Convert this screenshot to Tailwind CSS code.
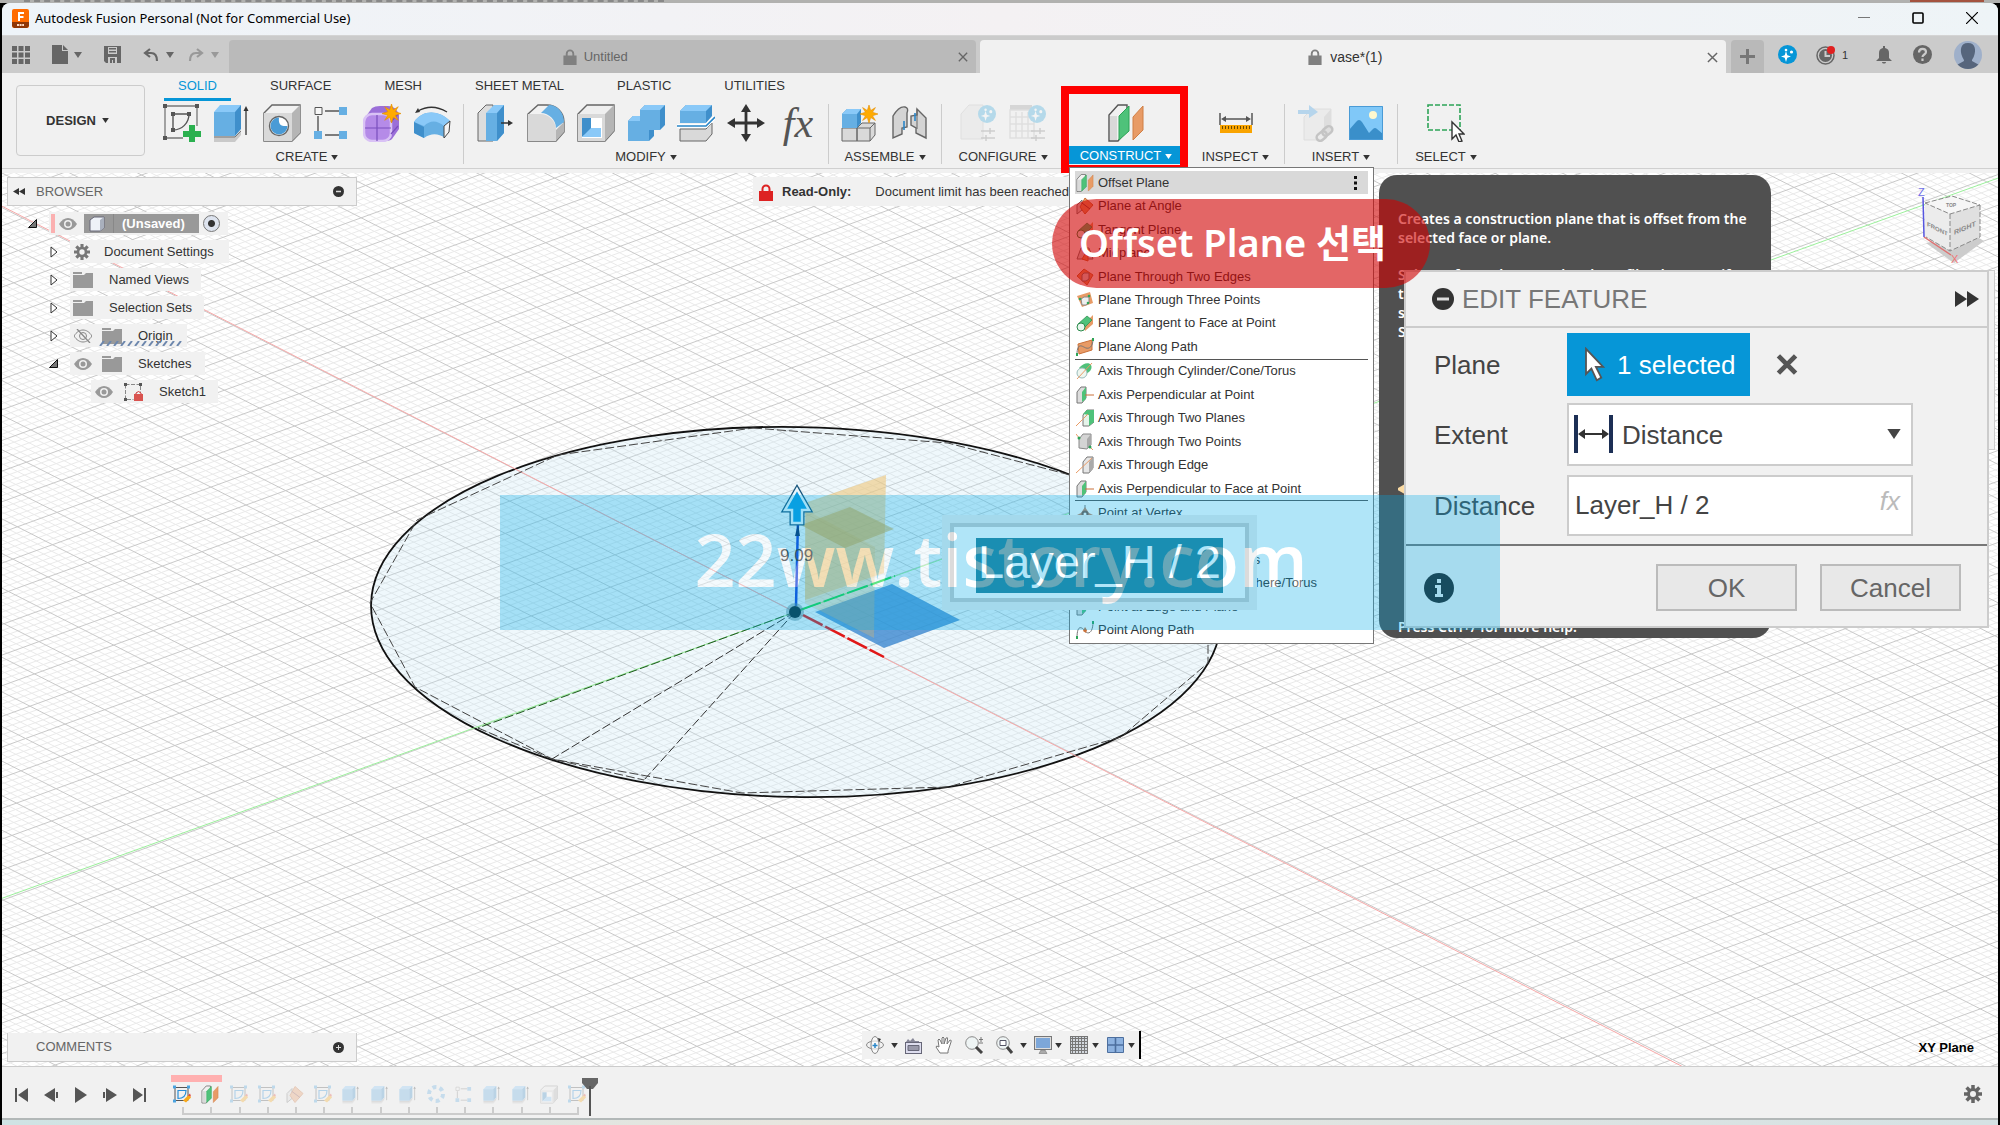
<!DOCTYPE html>
<html lang="en">
<head>
    <meta charset="UTF-8">
    <meta name="viewport" content="width=device-width, initial-scale=1.0">
    <title>Autodesk Fusion Personal (Not for Commercial Use)</title>
    <script src="https://cdn.jsdelivr.net/npm/@tailwindcss/browser@4"></script>
</head>
<body class="relative flex h-screen flex-col overflow-hidden bg-black font-['Liberation_Sans','Noto_Sans_CJK_KR',sans-serif] text-[13px] leading-4 text-[#333]">

    <!-- Shared icons -->
    <svg class="hidden" aria-hidden="true">
        <symbol id="caret" viewBox="0 0 8 6"><path d="M0 0h8L4 6z" fill="currentColor"/></symbol>
        <symbol id="lock" viewBox="0 0 14 17"><path d="M3.5 8V5a3.5 3.5 0 0 1 7 0v3" fill="none" stroke="currentColor" stroke-width="2"/><path d="M0 7h14v10H0z" fill="currentColor"/></symbol>
        <symbol id="close" viewBox="0 0 12 12"><path d="M1 1l10 10M11 1L1 11" stroke="currentColor" stroke-width="1.6"/></symbol>
        <symbol id="sketch" viewBox="0 0 38 38">
            <path d="M2 2h32v20M2 2v32h18" fill="none" stroke="#777" stroke-width="1.3"/>
            <path d="M10 10h16c0 9-7 16-16 16z" fill="none" stroke="#555" stroke-width="1.4"/>
            <path d="M0 0h4v4H0zM32 0h4v4h-4zM0 32h4v4H0zM8 8h4v4H8zM24 8h4v4h-4zM8 24h4v4H8z" fill="#555"/>
        </symbol>
        <symbol id="tl-sketch" viewBox="0 0 18 18">
            <path d="M2 2h13v13H2z" fill="none" stroke="#555"/><path d="M5 5h8c0 5-3 8-8 8z" fill="none" stroke="#2a8fd8" stroke-width="1.2"/>
            <path d="M0 0h3v3H0zM14 0h3v3h-3zM0 14h3v3H0z" fill="#4aa3e0"/><path d="M10 15l6-6 2 3-5 5z" fill="#f9a91a"/><path d="M15 10l2-2 1 3z" fill="#e0453a"/>
        </symbol>
        <symbol id="extrude" viewBox="0 0 38 38">
            <path d="M1 32h21l6-6v5l-6 7H1z" fill="#c9c9c9"/><path d="M1 33h21l6-6" fill="none" stroke="#777"/>
            <path d="M1 8l6-7h21v23l-6 7H1z" fill="#8ac9f8"/><path d="M1 8h21v24H1z" fill="#66afe3"/><path d="M22 8l6-7v24l-6 7z" fill="#3f8fcb"/>
            <path d="M33 31V6" stroke="#333" stroke-width="1.3"/><path d="M33 2l2.500 5h-5z" fill="#333"/>
        </symbol>
        <symbol id="pattern" viewBox="0 0 38 38">
            <path d="M12 7h14M5 12v15M12 31h14" stroke="#555" stroke-width="1.4"/><path d="M2 3.500h7v7H2z" fill="#f7f7f7" stroke="#555"/>
            <path d="M26 3h8v8h-8zM1 27h8v8H1zM26 27h8v8h-8z" fill="#66afe3"/>
        </symbol>
        <symbol id="shell" viewBox="0 0 38 38">
            <path d="M1 10l9-9h27v26l-9 10H1z" fill="#efefef" stroke="#666" stroke-width="1.4"/><path d="M28 10l9-9v26l-9 10z" fill="#b5b5b5"/>
            <path d="M1 10h27v27H1z" fill="#d9d9d9"/><path d="M5 14h20v20H5z" fill="#fff"/><path d="M5 14h9v12l-9 7z" fill="#3f8fcb"/><path d="M14 24h10v9H5z" fill="#8ac9f8"/>
        </symbol>
        <symbol id="offset" viewBox="0 0 38 38">
            <path d="M2 37V11l9-10h9v25l-9 11z" fill="#f1f1f1" stroke="#555" stroke-width="1.4"/><path d="M3 12h7v24H3z" fill="#d9d9d9"/>
            <path d="M12 36V12l10-10v25z" fill="#4fc27a" stroke="#2da457"/><path d="M26 36V13l10-11v24z" fill="#e89b66" stroke="#d07f45"/>
        </symbol>
        <symbol id="star" viewBox="0 0 18 18"><path d="M9 0l1.700 5.500L15.400 2.600 12.500 7.300 18 9l-5.500 1.700 2.900 4.700-4.700-2.900L9 18l-1.700-5.500-4.700 2.900 2.900-4.700L0 9l5.500-1.700L2.600 2.600l4.700 2.900z" fill="#ffab00" stroke="#e58e00" stroke-width=".6"/></symbol>
        <symbol id="sparkle" viewBox="0 0 19 19"><circle cx="9.500" cy="9.500" r="9.500" fill="#0696d7"/><path d="M8 6l1.300 4.200L13 11.500l-3.700 1.200L8 17l-1.300-4.300L3 11.500l3.700-1.300z" fill="#fff"/><circle cx="8" cy="5" r="1.300" fill="#fff"/><circle cx="13.500" cy="7" r="1.600" fill="#fff"/></symbol>
        <symbol id="eye" viewBox="0 0 18 12"><path d="M0 6c5-8 13-8 18 0-5 8-13 8-18 0z" fill="#999"/><circle cx="9" cy="6" r="4" fill="#f1f1f1"/><circle cx="9" cy="6" r="2.500" fill="#999"/></symbol>
        <symbol id="folder" viewBox="0 0 20 16"><path d="M0 0h9v2H0zM0 3h11l2-2h7v15H0z" fill="#999"/></symbol>
        <symbol id="closed" viewBox="0 0 8 12"><path d="M1 1l6 5-6 5z" fill="#fff" stroke="#333"/></symbol>
        <symbol id="opened" viewBox="0 0 9 9"><path d="M8.500.500v8h-8z" fill="#777" stroke="#111"/></symbol>
        <symbol id="gear" viewBox="0 0 18 18"><g stroke="currentColor" stroke-width="3.500"><path d="M9 0v18M0 9h18M2.600 2.600l12.800 12.800M15.400 2.600L2.600 15.400"/></g><circle cx="9" cy="9" r="6" fill="currentColor"/><circle cx="9" cy="9" r="3" fill="#f1f1f1"/></symbol>
        <!-- construct menu glyphs -->
        <symbol id="m-angle" viewBox="0 0 18 18"><path d="M1 8l5-5v10l-5 4z" fill="#ddd" stroke="#777"/><path d="M9 1l8 7-8 9-5-7z" fill="#e89b66" stroke="#c9713a"/><path d="M6 6l8 6" stroke="#844" /></symbol>
        <symbol id="m-tangent" viewBox="0 0 18 18"><path d="M7 11L17 1v9L9 17z" fill="#e89b66"/><path d="M2 10l9-8 5 4-9 9z" fill="#4fc27a" stroke="#2b8a4c" stroke-width=".7"/><circle cx="5" cy="13" r="4" fill="#e8f7ee" stroke="#2b8a4c"/></symbol>
        <symbol id="m-mid" viewBox="0 0 18 18"><path d="M1 15l4-11h8l4 11z" fill="#ddd" stroke="#777"/><path d="M6 15l6-10v12z" fill="#e89b66" stroke="#c9713a"/></symbol>
        <symbol id="m-edges" viewBox="0 0 18 18"><path d="M1 8l7-7 9 6-6 10z" fill="#e89b66" stroke="#c9713a"/><path d="M6 7l2-2h5v6l-3 2H6z" fill="#ddd" stroke="#777"/></symbol>
        <symbol id="m-points" viewBox="0 0 18 18"><path d="M1 5l13-4 3 11-11 4z" fill="#e89b66"/><path d="M5 8l3-2h5v6l-3 2H6z" fill="#eee" stroke="#888"/><circle cx="4" cy="8" r="1.300" fill="#2da457"/><circle cx="13" cy="5" r="1.300" fill="#2da457"/><circle cx="12" cy="12" r="1.300" fill="#2da457"/></symbol>
        <symbol id="m-path" viewBox="0 0 18 18"><path d="M2 6l14-4v10L3 16z" fill="#e89b66" stroke="#c9713a"/><path d="M1 17c0-14 6-8 9-7s7-1 7-9" fill="none" stroke="#777"/><path d="M0 15h2v3H0zM16 0h2v3h-2z" fill="#2da457"/></symbol>
        <symbol id="m-cyl" viewBox="0 0 18 18"><path d="M3 6c4-5 10-6 12-3 2 4-2 8-6 9z" fill="#4fc27a"/><circle cx="6" cy="11" r="5" fill="#eef7f0" stroke="#9bb"/><path d="M1 17L16 1" stroke="#e89b66"/></symbol>
        <symbol id="m-perp" viewBox="0 0 18 18"><path d="M1 17V6l4-5h5v11l-4 5z" fill="#ddd" stroke="#777"/><path d="M6 16V6l4-5v12z" fill="#4fc27a"/><path d="M9 9h9" stroke="#c9713a"/></symbol>
        <symbol id="m-axis" viewBox="0 0 18 18"><path d="M7 17V6l4-5h6v11l-4 5z" fill="#e6e6e6" stroke="#777"/><path d="M13 17V6l4-5v12z" fill="#aaa"/><path d="M0 17L16 2" stroke="#e89b66"/></symbol>
        <symbol id="m-axispts" viewBox="0 0 18 18"><path d="M3 15V6l4-5h8v11l-4 4z" fill="#d4d4d4" stroke="#888"/><path d="M11 16V6l4-5v11z" fill="#aaa"/><path d="M0 1l4 5M13 13l4 4" stroke="#e89b66"/><circle cx="3" cy="5" r="1.500" fill="#2da457"/><circle cx="14" cy="14" r="1.500" fill="#2da457"/></symbol>
        <symbol id="m-planes" viewBox="0 0 18 18"><path d="M7 17V6l4-5h7v12l-5 4z" fill="#e6f4ea" stroke="#777"/><path d="M7 5l4-4h7v12l-5 4V6z" fill="#4fc27a"/><path d="M0 17L12 5" stroke="#e89b66"/></symbol>
        <symbol id="m-vertex" viewBox="0 0 18 18"><path d="M9 1v5" stroke="#777"/><path d="M9 3l4 6 4 2-8 4-8-4 4-2z" fill="#c98a68"/><circle cx="9" cy="10" r="2.500" fill="#fff" stroke="#7a5d50" stroke-width="2"/></symbol>
        <symbol id="m-curve" viewBox="0 0 18 18"><path d="M1 17c0-14 5-11 8-7s8 2 8-9" fill="none" stroke="#777"/><path d="M0 15h2v3H0zM16 0h2v3h-2z" fill="#2da457"/><path d="M9 6l2 3-1 3-3-2z" fill="#c9713a"/></symbol>
    </svg>

    <!-- Edge of the window behind -->
    <div class="flex h-[3px] shrink-0 items-start justify-between bg-[#b1b1af] pr-4 pl-6">
        <div class="h-[2px] w-[640px] border-t-2 border-dashed border-[#888]"></div>
        <div class="h-[2px] w-[74px] bg-[#a4533f]"></div>
    </div>

    <div class="mx-[2px] flex min-h-0 flex-1 flex-col overflow-hidden rounded-t-lg bg-[#f1f1f1]">
        <!-- Title bar -->
        <header class="flex h-[33px] shrink-0 items-center border-b border-[#d4d4d4] bg-linear-to-r from-[#eef4f9] via-[#f4f1f3] to-[#eef4f7] pr-5 pb-[2px] pl-[10px]">
            <svg class="h-[19px] w-[17px]" viewBox="0 0 17 19"><rect width="17" height="19" rx="2" fill="#ff6b00"/><path d="M0 13h17v4l-2 2H2l-2-2z" fill="#8f3606"/><path d="M6 3h6v2H8v2h3.500v2H8v3H6z" fill="#fff"/><path d="M5 16h7" stroke="#ffd9c0" stroke-dasharray="2 .6" stroke-width="2"/></svg>
            <h1 class="ml-[6px] flex-1 font-['Noto_Sans',sans-serif] text-[13px] text-black">Autodesk Fusion Personal (Not for Commercial Use)</h1>
            <div class="flex items-center gap-[42px] text-black">
                <button aria-label="Minimize"><svg class="h-3 w-3" viewBox="0 0 12 12"><path d="M0 5.500h12" stroke="#777"/></svg></button>
                <button aria-label="Maximize"><svg class="h-3 w-3" viewBox="0 0 12 12"><rect x="1" y="1" width="10" height="10" rx="1" fill="none" stroke="#000" stroke-width="1.600"/></svg></button>
                <button aria-label="Close"><svg class="h-3 w-3" viewBox="0 0 12 12"><path d="M0 0l12 12M12 0L0 12" stroke="#000" stroke-width="1.200"/></svg></button>
            </div>
        </header>

        <!-- Quick access and document tabs -->
        <nav class="flex h-[37px] shrink-0 items-end bg-[#cbcbcb] text-[#666]">
            <div class="flex h-full w-[227px] shrink-0 items-center pl-[10px]">
                <button aria-label="Data panel"><svg class="h-[18px] w-[18px]" viewBox="0 0 18 18"><path d="M2.500 0v18M9 0v18M15.500 0v18" stroke="currentColor" stroke-width="5" stroke-dasharray="5 1.500"/></svg></button>
                <button class="ml-[22px] flex items-center gap-[6px]" aria-label="File"><svg class="h-[19px] w-4" viewBox="0 0 16 19"><path d="M0 0h10v6h6v13H0z" fill="currentColor"/><path d="M11 0l5 5h-5z" fill="currentColor"/></svg><svg class="h-[6px] w-2"><use href="#caret"/></svg></button>
                <button class="ml-[22px]" aria-label="Save"><svg class="h-[17px] w-[17px]" viewBox="0 0 17 17"><path d="M0 0h17v17H2l-2-2z" fill="currentColor"/><path d="M4 1h9v7H4zM4 11h9v6H4z" fill="#cbcbcb"/><path d="M5 2h7v1.500H5zM5 5h7v1.500H5zM6 12h5v5H9v-3H8v3H6z" fill="currentColor"/></svg></button>
                <button class="ml-[22px] flex items-center gap-[7px]" aria-label="Undo"><svg class="h-[14px] w-4" viewBox="0 0 16 14"><path d="M2 5h6c4 0 6 3 6 8M7 1L2 5l5 4" fill="none" stroke="currentColor" stroke-width="2.200"/></svg><svg class="h-[6px] w-2"><use href="#caret"/></svg></button>
                <button class="ml-[14px] flex items-center gap-[7px] text-[#999]" aria-label="Redo"><svg class="h-[14px] w-4" viewBox="0 0 16 14"><path d="M14 5H8c-4 0-6 3-6 8M9 1l5 4-5 4" fill="none" stroke="currentColor" stroke-width="2.200"/></svg><svg class="h-[6px] w-2"><use href="#caret"/></svg></button>
            </div>
            <div class="flex h-[33px] flex-1 items-center rounded-t-[4px] bg-[#bababa] pt-px pr-2 pl-1">
                <a href="#" class="flex flex-1 items-center justify-center gap-[7px]"><svg class="h-4 w-[14px] text-[#808080]"><use href="#lock"/></svg>Untitled</a>
                <button aria-label="Close Untitled"><svg class="h-[10px] w-[10px]"><use href="#close"/></svg></button>
            </div>
            <div class="ml-1 flex h-[33px] flex-1 items-center rounded-t-[4px] bg-[#f1f1f1] pt-px pr-2 pl-1">
                <a href="#" class="flex flex-1 items-center justify-center gap-2 text-[14px] text-[#333]"><svg class="h-4 w-[14px] text-[#808080]"><use href="#lock"/></svg>vase*(1)</a>
                <button aria-label="Close vase"><svg class="h-[11px] w-[11px]"><use href="#close"/></svg></button>
            </div>
            <button class="ml-[5px] flex h-[33px] w-[33px] items-center justify-center rounded-t-[4px] bg-[#b9b9b9]" aria-label="New tab"><svg class="h-[15px] w-[15px]" viewBox="0 0 15 15"><path d="M7.500 0v15M0 7.500h15" stroke="#777" stroke-width="3"/></svg></button>
            <div class="flex h-full w-[234px] shrink-0 items-center pr-4 pl-[14px]">
                <button aria-label="Extensions"><svg class="h-[19px] w-[19px]"><use href="#sparkle"/></svg></button>
                <button class="ml-[19px] flex items-center gap-[6px]" aria-label="Job status"><svg class="h-5 w-5" viewBox="0 0 20 20"><circle cx="9.500" cy="10.500" r="8.500" fill="none" stroke="currentColor" stroke-width="1.500"/><circle cx="9.500" cy="10.500" r="6.500" fill="currentColor"/><path d="M9.500 6v5H14" stroke="#cbcbcb" stroke-width="2" fill="none"/><circle cx="15" cy="5" r="4" fill="#e02020"/></svg><span class="text-[11px] text-[#333]">1</span></button>
                <button aria-label="Notifications" class="ml-7"><svg class="h-[18px] w-4" viewBox="0 0 16 18"><path d="M7 0h2v2c3 .5 4 2.500 4 5v5l3 3H0l3-3V7c0-2.500 1-4.500 4-5zM6 16h4c0 2-4 2-4 0z" fill="currentColor"/></svg></button>
                <button aria-label="Help" class="ml-[21px]"><svg class="h-[19px] w-[19px]" viewBox="0 0 19 19"><circle cx="9.500" cy="9.500" r="9.500" fill="currentColor"/><path d="M6 7.500c0-5 7-4.500 7-.5 0 2.500-3.500 2.500-3.500 5M9.500 13.500v2.500" fill="none" stroke="#cbcbcb" stroke-width="2.200"/></svg></button>
                <button aria-label="Account" class="ml-auto"><svg class="h-7 w-7" viewBox="0 0 28 28"><clipPath id="round"><circle cx="14" cy="14" r="14"/></clipPath><g clip-path="url(#round)"><path d="M0 0h28v28H0z" fill="#9fb0ca"/><path d="M14 2c8 0 8 8 6 13-1 3-2 3-2 5l9 5v3H1v-3l9-5c0-2-1-2-2-5C6 10 6 2 14 2z" fill="#56657c"/></g></svg></button>
            </div>
        </nav>

        <!-- Ribbon -->
        <div class="flex h-[96px] shrink-0 border-b border-[#d0d0d0]">
            <button class="mt-3 mr-[6px] ml-[14px] flex h-[71px] w-[129px] shrink-0 items-center justify-center gap-[6px] rounded-[4px] border border-[#ccc] pr-[6px] font-bold">DESIGN <svg class="h-[5px] w-[7px]"><use href="#caret"/></svg></button>
            <div>
                <div class="flex h-[28px] gap-[25px] pl-[13px]">
                    <a href="#" class="border-b-[3px] border-[#0696d7] px-[14px] pt-[5px] text-[#0696d7]">SOLID</a>
                    <a href="#" class="px-[14px] pt-[5px]">SURFACE</a>
                    <a href="#" class="px-[14px] pt-[5px]">MESH</a>
                    <a href="#" class="px-[14px] pt-[5px]">SHEET METAL</a>
                    <a href="#" class="px-[14px] pt-[5px]">PLASTIC</a>
                    <a href="#" class="px-[14px] pt-[5px]">UTILITIES</a>
                </div>
                <div class="mt-[3px] flex h-[60px]">
                    <!-- Create -->
                    <section class="border-r border-[#ccc] px-[6px]">
                        <div class="flex">
                            <button class="flex w-[50px] justify-center" aria-label="Create Sketch"><svg class="h-[38px] w-[38px]" viewBox="0 0 38 38"><use href="#sketch" width="38" height="38"/><path d="M26 21h6v6h6v6h-6v5h-6v-5h-6v-6h6z" fill="#2bb04f"/></svg></button>
                            <button class="flex w-[50px] justify-center" aria-label="Extrude"><svg class="h-[38px] w-[38px]"><use href="#extrude"/></svg></button>
                            <button class="flex w-[50px] justify-center" aria-label="Hole"><svg class="h-[38px] w-[38px]" viewBox="0 0 38 38"><path d="M1 9l8-8h28v28l-8 8H1z" fill="#f2f2f2" stroke="#666" stroke-width="1.400"/><path d="M29 9l8-8v28l-8 8z" fill="#b5b5b5"/><path d="M1 9h28v28H1z" fill="#d9d9d9"/><circle cx="16" cy="22" r="9.500" fill="#fff" stroke="#666" stroke-width="1.400"/><path d="M16 13.500c-1 8 3 9 8.500 8.500A8.500 8.500 0 1 1 16 13.500z" fill="#4a9bd6"/></svg></button>
                            <button class="flex w-[50px] justify-center" aria-label="Rectangular Pattern"><svg class="h-[38px] w-[38px]"><use href="#pattern"/></svg></button>
                            <button class="flex w-[50px] justify-center" aria-label="Create Form"><svg class="h-[38px] w-[38px]" viewBox="0 0 38 38"><path d="M1 15L9 4q3-2 8-2h8q8 0 11 9v14l-7 10q-2 2-8 2h-9Q1 37 1 28z" fill="#9b6fd8"/><rect x="1" y="10" width="27" height="27" rx="8" fill="#b58be8" stroke="#d9c2f5" stroke-width="2.500"/><path d="M14 11v26M2 24h26M28 18l7-8M28 30l7-8" stroke="#7a4fbd" stroke-width="1.200"/><use href="#star" x="19" y="0" width="19" height="19"/></svg></button>
                            <button class="flex w-[50px] justify-center" aria-label="Revolve"><svg class="h-[38px] w-[38px]" viewBox="0 0 38 38"><path d="M1 18c8-12 24-13 36-1l-5 17c-7-5-14-5-21 0L1 29z" fill="#66afe3"/><path d="M1 18c8-12 24-13 36-1l-6 5c-7-6-14-6-20 0z" fill="#8ac9f8"/><path d="M1 18l10 5v11L1 29z" fill="#3f8fcb"/><path d="M31 22l6-5-1 11-5 6z" fill="#f4f4f4" stroke="#444"/><path d="M5 7q14-8 29 1" fill="none" stroke="#333" stroke-width="1.300"/><path d="M2 9l3-5 2 4z" fill="#333"/></svg></button>
                        </div>
                        <button class="mt-[7px] flex w-full items-center justify-center gap-1">CREATE <svg class="h-[5px] w-[7px]"><use href="#caret"/></svg></button>
                    </section>
                    <!-- Modify -->
                    <section class="border-r border-[#ccc] px-[7px]">
                        <div class="flex">
                            <button class="flex w-[50px] justify-center" aria-label="Press Pull"><svg class="h-[38px] w-[38px]" viewBox="0 0 38 38"><path d="M1 37V9l8-8h7v36z" fill="#ddd" stroke="#666"/><path d="M9 37V9l8-8h10v28l-7 8z" fill="#8ac9f8"/><path d="M9 9h11v28H9z" fill="#66afe3"/><path d="M20 9l7-8v28l-7 8z" fill="#3f8fcb"/><path d="M24 19h8" stroke="#333" stroke-width="1.400"/><path d="M31 16l5 3-5 3z" fill="#333"/></svg></button>
                            <button class="flex w-[50px] justify-center" aria-label="Fillet"><svg class="h-[38px] w-[38px]" viewBox="0 0 38 38"><path d="M1 10l10-9h9c9 0 17 7 17 17v10l-8 9H1z" fill="#f2f2f2" stroke="#666" stroke-width="1.400"/><path d="M29 26l8-8v10l-8 9z" fill="#b5b5b5"/><path d="M1 10h12c9 0 16 7 16 16v11H1z" fill="#d9d9d9"/><path d="M14 9l8-8c9 0 15 8 15 17l-8 6c0-8-7-15-15-15z" fill="#66afe3"/></svg></button>
                            <button class="flex w-[50px] justify-center" aria-label="Shell"><svg class="h-[38px] w-[38px]"><use href="#shell"/></svg></button>
                            <button class="flex w-[50px] justify-center" aria-label="Combine"><svg class="h-[38px] w-[38px]" viewBox="0 0 38 38"><path d="M1 17l5-5h7V6l5-5h20v20l-5 5h-6v6l-5 5H1z" fill="#3f8fcb"/><path d="M1 17l5-5h7v5zM13 6l5-5h20l-5 5z" fill="#8ac9f8"/><path d="M1 17h12V6h20v20H22v11H1z" fill="#66afe3"/></svg></button>
                            <button class="flex w-[50px] justify-center" aria-label="Split Body"><svg class="h-[38px] w-[38px]" viewBox="0 0 38 38"><path d="M3 25h26l6-6v11l-6 7H3z" fill="#d9d9d9" stroke="#666"/><path d="M3 7l6-6h26v11l-6 7H3z" fill="#3f8fcb"/><path d="M3 7l6-6h26l-6 6z" fill="#8ac9f8"/><path d="M3 7h26v12H3z" fill="#66afe3"/><path d="M0 22h29l9-9" fill="none" stroke="#fff" stroke-width="4"/><path d="M0 22h29l9-9" fill="none" stroke="#2a86c8" stroke-width="1.600"/></svg></button>
                            <button class="flex w-[50px] justify-center" aria-label="Move"><svg class="h-[38px] w-[38px]" viewBox="0 0 38 38"><path d="M19 5v28M5 19h28" stroke="#333" stroke-width="2.800"/><path d="M19 0l5 8H14zM19 38l5-8H14zM0 19l8-5v10zM38 19l-8-5v10z" fill="#333"/></svg></button>
                            <button class="h-[38px] w-[50px] pl-1 text-center font-['Liberation_Serif',serif] text-[42px] leading-[32px] text-[#555] italic" aria-label="Change Parameters">fx</button>
                        </div>
                        <button class="mt-[7px] flex w-full items-center justify-center gap-1">MODIFY <svg class="h-[5px] w-[7px]"><use href="#caret"/></svg></button>
                    </section>
                    <!-- Assemble -->
                    <section class="border-r border-[#ccc] px-[6px]">
                        <div class="flex">
                            <button class="flex w-[50px] justify-center" aria-label="New Component"><svg class="h-[38px] w-[38px]" viewBox="0 0 38 38"><path d="M1 24h15v13H1zM16 24l5-5h13v12l-5 6H16z" fill="#d9d9d9" stroke="#666"/><path d="M16 24h13v13M29 24l5-5" fill="none" stroke="#666"/><path d="M1 10l5-5h14v14l-4 5H1z" fill="#3f8fcb"/><path d="M1 10h15v14H1z" fill="#66afe3"/><path d="M1 10l5-5h14l-4 5z" fill="#8ac9f8"/><use href="#star" x="19" y="1" width="18" height="18"/></svg></button>
                            <button class="flex w-[50px] justify-center" aria-label="Joint"><svg class="h-[38px] w-[38px]" viewBox="0 0 38 38"><path d="M2 12Q8 2 14 3q4 1 2 6v14l-5 1v6l-9 4zM26 5l9 9v20l-10-5v-5l-5-3v-9l6-1z" fill="#d4d4d4" stroke="#666" stroke-width="1.400"/><path d="M26 5v20" stroke="#666"/><path d="M13 17v9M24 9v8" stroke="#2a86c8" stroke-width="1.600"/></svg></button>
                        </div>
                        <button class="mt-[7px] flex w-full items-center justify-center gap-1">ASSEMBLE <svg class="h-[5px] w-[7px]"><use href="#caret"/></svg></button>
                    </section>
                    <!-- Configure -->
                    <section class="border-r border-[#ccc] px-[11px]">
                        <div class="flex">
                            <button class="flex w-[50px] justify-center opacity-25" aria-label="Configure Design"><svg class="h-[38px] w-[38px]" viewBox="0 0 38 38"><path d="M2 10l8-9h14v34H2z" fill="#ddd" stroke="#aaa"/><use href="#sparkle" x="19" y="1" width="18" height="18"/><path d="M22 27h14M22 34h14M31 24v6M27 31v6" stroke="#666" stroke-width="1.500"/></svg></button>
                            <button class="flex w-[50px] justify-center opacity-25" aria-label="Configuration Table"><svg class="h-[38px] w-[38px]" viewBox="0 0 38 38"><path d="M1 1h22v5H1z" fill="#888"/><path d="M1 6h24v28H1zM1 13h24M1 20h24M1 27h24M7 8v26M13 8v26M19 8v26" fill="none" stroke="#aaa" stroke-width="1.500"/><use href="#sparkle" x="19" y="1" width="18" height="18"/><path d="M22 27h14M22 34h14M31 24v6M27 31v6" stroke="#666" stroke-width="1.500"/></svg></button>
                        </div>
                        <button class="mt-[7px] flex w-full items-center justify-center gap-1">CONFIGURE <svg class="h-[5px] w-[7px]"><use href="#caret"/></svg></button>
                    </section>
                    <!-- Construct -->
                    <section class="w-[122px] px-1">
                        <button class="flex w-full justify-center" aria-label="Offset Plane"><svg class="h-[38px] w-[38px]"><use href="#offset"/></svg></button>
                        <button class="mt-1 flex h-[18px] w-full items-center justify-center gap-1 bg-[#0696d7] pt-[2px] text-white">CONSTRUCT <svg class="h-[5px] w-[7px]"><use href="#caret"/></svg></button>
                    </section>
                    <!-- Inspect -->
                    <section class="w-[98px] border-r border-[#ccc] px-[6px]">
                        <button class="flex w-full justify-center" aria-label="Measure"><svg class="h-[38px] w-[38px]" viewBox="0 0 38 38"><path d="M3 9v12M35 9v12M7 15h24" stroke="#555" stroke-width="1.500"/><path d="M4 15l5-3v6zM34 15l-5-3v6z" fill="#555"/><path d="M3 21h32v8H3z" fill="#f9a400"/><path d="M5 23.500h28" stroke="#6b4a00" stroke-width="3" stroke-dasharray="1 2"/></svg></button>
                        <button class="mt-[7px] flex w-full items-center justify-center gap-1">INSPECT <svg class="h-[5px] w-[7px]"><use href="#caret"/></svg></button>
                    </section>
                    <!-- Insert -->
                    <section class="border-r border-[#ccc] px-[6px]">
                        <div class="flex">
                            <button class="flex w-[50px] justify-center opacity-50" aria-label="Insert Derive"><svg class="h-[38px] w-[38px]" viewBox="0 0 38 38"><path d="M7 13l8-8h19v23l-7 8H7z" fill="#e6e6e6" stroke="#ccc"/><path d="M27 13l7-8v23l-7 8z" fill="#ccc"/><path d="M1 6h11V1l9 7-9 6v-4H1z" fill="#7dbbe8"/><rect x="19" y="29" width="11" height="7" rx="3.500" transform="rotate(-40 24 32)" fill="none" stroke="#999" stroke-width="2.500"/><rect x="25" y="23" width="11" height="7" rx="3.500" transform="rotate(-40 31 27)" fill="none" stroke="#999" stroke-width="2.500"/></svg></button>
                            <button class="flex w-[50px] justify-center" aria-label="Canvas"><svg class="h-[38px] w-[38px]" viewBox="0 0 38 38"><path d="M2 2h34v34H2z" fill="#80c8f8"/><circle cx="26" cy="11" r="4" fill="#fff9cf"/><path d="M2 26l7-8q3-4 6 0l7 11 4-4q2-2 4 0l6 5v6H2z" fill="#3a8fca"/><path d="M2.500 2.500h33v33h-33z" fill="none" stroke="#4a9bd6"/></svg></button>
                        </div>
                        <button class="mt-[7px] flex w-full items-center justify-center gap-1">INSERT <svg class="h-[5px] w-[7px]"><use href="#caret"/></svg></button>
                    </section>
                    <!-- Select -->
                    <section class="w-[96px] px-[6px]">
                        <button class="flex w-full justify-center" aria-label="Select"><svg class="h-[38px] w-[38px]" viewBox="0 0 38 38"><rect x="1" y="1" width="32" height="25" fill="none" stroke="#2da457" stroke-width="1.600" stroke-dasharray="5 2"/><path d="M25 18v17l4-4 3 7 3-1-3-7h5z" fill="#fff" stroke="#333" stroke-width="1.400"/></svg></button>
                        <button class="mt-[7px] flex w-full items-center justify-center gap-1">SELECT <svg class="h-[5px] w-[7px]"><use href="#caret"/></svg></button>
                    </section>
                </div>
            </div>
        </div>

        <!-- Modelling canvas -->
        <main class="relative mt-1 min-h-0 flex-1 overflow-hidden bg-white">
            <svg class="absolute inset-0 h-full w-full" role="img" aria-label="Circle sketch on the XY plane">
                <g transform="translate(793 439)" fill="none">
                    <path id="minorGrid" stroke="#eaeaea"/>
                    <path id="majorGrid" stroke="#c9c9c9"/>
                    <ellipse rx="425" ry="185" transform="translate(1 0) rotate(1.050)" fill="#bfe3f5" fill-opacity=".25" stroke="#111" stroke-width="1.800"/>
                    <path d="M-1600-819L1400 717" stroke="#f7a8a8"/>
                    <path d="M-1000 361L1400-505" stroke="#9bf09b"/>
                    <path d="M-42-184L153-169 275-137 365-88 413-37 413 51 326 125 153 175-53 181-243 147-380 75-425-9-378-92-237-157zM-317 116L-243 147-151 168" stroke="#444" stroke-dasharray="9 3"/>
                    <path d="M0 0L-317 116" stroke="#1e5a1e" stroke-dasharray="9 3"/>
                    <path d="M0 0L-243 147M0 0L-151 168" stroke="#333" stroke-dasharray="9 3"/>
                    <path d="M20 0L97-28 165 8 89 36z" fill="#3b87cf" fill-opacity=".8"/>
                    <path d="M10-109L91-137 89-39 10-12z" fill="#efc77a" fill-opacity=".6"/>
                    <path d="M11-102L80-65 79 26 10-9z" fill="#e8b860" fill-opacity=".3"/>
                    <path d="M6-87L55-105 99-83 50-64z" fill="#cf9f30" fill-opacity=".5"/>
                    <path d="M5-2L100-36" stroke="#19d94b" stroke-width="2" stroke-dasharray="22 3"/>
                    <path d="M8 3L89 45" stroke="#e01818" stroke-width="2.500" stroke-dasharray="22 3"/>
                    <path d="M1-6L3-92" stroke="#1440d8" stroke-width="2.500"/>
                    <path d="M3-88l-3 12h5z" fill="#0a2a66"/>
                    <path d="M2-123l12 21H7v13H-3v-13h-7z" fill="#0c9be0" stroke="#17557c" stroke-width="5"/>
                    <path d="M2-123l12 21H7v13H-3v-13h-7z" fill="#0c9be0" stroke="#e8f6fd" stroke-width="2.500"/>
                    <circle r="9" fill="#5c8896" fill-opacity=".5"/><circle r="6" fill="#0d2a35"/>
                    <text x="-15" y="-51" font-size="17" fill="#333">9.09</text>
                </g>
            </svg>

            <!-- View cube -->
            <svg class="absolute top-[12px] right-[10px] h-[84px] w-[72px]" viewBox="0 0 72 84">
                <path d="M10 58l28 20 30-22-10-6z" fill="#ccc"/>
                <path d="M9 18l27-7 28 9v32L34 66 8 52z" fill="#ececec"/><path d="M34 29l30-9v32L34 66z" fill="#e0e0e0"/><path d="M9 18l27-7 28 9-30 9z" fill="#f6f6f6"/>
                <path d="M9 18l27-7 28 9-30 9zM34 29v37M64 20v32L34 66 10 52" fill="none" stroke="#888" stroke-dasharray="5 2"/>
                <path d="M7 12l1 40" stroke="#5555e0" stroke-width="1.500"/><path d="M8 52l27 18" stroke="#e07070" stroke-width="1.500"/>
                <g font-size="8" font-weight="bold" fill="#888"><text transform="translate(11 41) skewY(26)" font-size="6">FRONT</text><text transform="translate(38 50) skewY(-23)" font-size="7">RIGHT</text><text x="30" y="22" font-size="5">TOP</text></g>
                <text x="2" y="11" font-size="11" fill="#7070e8">Z</text><text x="35" y="78" font-size="11" fill="#ee7777">X</text>
            </svg>

            <!-- Read-only notice -->
            <div class="absolute top-1 left-[751px] flex h-[29px] w-[440px] items-center bg-[#f1f1f1] pt-px pl-[6px]">
                <svg class="h-[17px] w-[14px] text-[#dd2222]"><use href="#lock"/></svg>
                <b class="ml-[9px]">Read-Only:</b>
                <span class="ml-6">Document limit has been reached</span>
            </div>

            <!-- Browser -->
            <aside class="absolute top-1 left-[5px] w-[350px]">
                <div class="flex h-[29px] items-center border border-[#ccc] bg-[#f1f1f1] pr-3 pl-[5px] text-[#666]">
                    <svg class="h-[7px] w-3" viewBox="0 0 12 7"><path d="M6 0v7L0 3.500zM12 0v7L6 3.500z" fill="#333"/></svg>
                    <h2 class="ml-[11px] flex-1">BROWSER</h2>
                    <button aria-label="Collapse browser"><svg class="h-[11px] w-[11px]" viewBox="0 0 11 11"><circle cx="5.500" cy="5.500" r="5.500" fill="#333"/><path d="M3 5.500h5" stroke="#ddd" stroke-width="1.500"/></svg></button>
                </div>
                <ul class="mt-[6px] flex flex-col gap-[5px]">
                    <li class="flex h-[23px] items-center pl-[21px]">
                        <svg class="h-[9px] w-[9px]"><use href="#opened"/></svg>
                        <div class="ml-3 flex h-full w-[179px] items-center bg-[#f1f1f1] pl-[2px]">
                            <span class="h-[19px] w-1 bg-[#fbb0b0]"></span>
                            <svg class="ml-1 h-3 w-[18px]"><use href="#eye"/></svg>
                            <span class="ml-[7px] flex h-[19px] w-[115px] items-center bg-[#999] pl-[5px] font-bold text-white"><svg class="h-4 w-4" viewBox="0 0 16 16"><path d="M1 4l4-3h10v11l-4 3H1z" fill="#eef2f8" stroke="#667"/><path d="M11 4l4-3v11l-4 3z" fill="#a9b0bd"/></svg><i class="ml-2 h-full w-px bg-[#888]"></i><span class="flex-1 pl-2">(Unsaved)</span></span>
                            <input type="radio" checked aria-label="Activate" class="ml-[4px] h-[17px] w-[17px] appearance-none rounded-full border border-[#777] bg-[radial-gradient(circle,#333_3px,#dde3ee_4px)]">
                        </div>
                    </li>
                    <li class="flex h-[23px] items-center pl-[43px]"><svg class="h-3 w-2"><use href="#closed"/></svg><div class="ml-3 flex h-full items-center bg-[#f1f1f1] pr-[15px] pl-1"><svg class="h-4 w-4 text-[#777]"><use href="#gear"/></svg><span class="ml-[14px]">Document Settings</span></div></li>
                    <li class="flex h-[23px] items-center pl-[43px]"><svg class="h-3 w-2"><use href="#closed"/></svg><div class="ml-3 flex h-full items-center bg-[#f1f1f1] pr-3 pl-[3px]"><svg class="h-4 w-5"><use href="#folder"/></svg><span class="ml-4">Named Views</span></div></li>
                    <li class="flex h-[23px] items-center pl-[43px]"><svg class="h-3 w-2"><use href="#closed"/></svg><div class="ml-3 flex h-full items-center bg-[#f1f1f1] pr-3 pl-[3px]"><svg class="h-4 w-5"><use href="#folder"/></svg><span class="ml-4">Selection Sets</span></div></li>
                    <li class="flex h-[23px] items-center pl-[43px]"><svg class="h-3 w-2"><use href="#closed"/></svg><div class="relative ml-3 flex h-full items-center bg-[#f1f1f1] pr-[14px] pl-1"><svg class="h-[14px] w-[18px]" viewBox="0 0 18 14"><path d="M0 7c5-8 13-8 18 0-5 8-13 8-18 0z" fill="none" stroke="#888"/><circle cx="9" cy="7" r="3.500" fill="none" stroke="#888"/><path d="M3 0l13 14" stroke="#888" stroke-width="1.300"/></svg><svg class="ml-[10px] h-4 w-5"><use href="#folder"/></svg><span class="ml-4">Origin</span>
                        <svg class="absolute bottom-px left-[29px] h-[5px] w-[84px]" viewBox="0 0 84 5"><path d="M1 5l4-5M8 5l4-5M15 5l4-5M22 5l4-5M29 5l4-5M36 5l4-5M43 5l4-5M50 5l4-5M57 5l4-5M64 5l4-5M71 5l4-5M78 5l4-5" stroke="#6d87ad" stroke-width="2"/></svg></div></li>
                    <li class="flex h-[23px] items-center pl-[42px]"><svg class="h-[9px] w-[9px]"><use href="#opened"/></svg><div class="ml-3 flex h-full items-center bg-[#f1f1f1] pr-[14px] pl-1"><svg class="h-3 w-[18px]"><use href="#eye"/></svg><svg class="ml-[10px] h-4 w-5"><use href="#folder"/></svg><span class="ml-4">Sketches</span></div></li>
                    <li class="flex h-[23px] items-center pl-[84px]"><div class="flex h-full items-center bg-[#f1f1f1] pr-3 pl-1"><svg class="h-3 w-[18px]"><use href="#eye"/></svg><svg class="ml-[11px] h-[18px] w-[19px]" viewBox="0 0 19 18"><path d="M1.500 1.500h15v8M1.500 1.500v15h8" fill="none" stroke="#888" stroke-dasharray="4 1.500"/><path d="M0 0h3v3H0zM15 0h3v3h-3zM0 15h3v3H0z" fill="#555"/><path d="M12 12v-2q2.500-3 5 0v2" fill="none" stroke="#c33"/><path d="M10 11h9v7h-9z" fill="#d9534f"/></svg><span class="ml-4">Sketch1</span></div></li>
                </ul>
            </aside>

            <!-- Comments -->
            <aside class="absolute bottom-1 left-[5px] flex h-[29px] w-[350px] items-center border border-t-0 border-[#ccc] bg-[#f1f1f1] pr-3 pl-7 text-[#666]">
                <h2 class="flex-1">COMMENTS</h2>
                <button aria-label="Expand comments"><svg class="h-[11px] w-[11px]" viewBox="0 0 11 11"><circle cx="5.500" cy="5.500" r="5.500" fill="#333"/><path d="M3 5.500h5M5.500 3v5" stroke="#ddd"/></svg></button>
            </aside>

            <!-- Navigation bar -->
            <div class="absolute bottom-[7px] left-[860px] flex h-7 items-center border-r-2 border-black bg-[#f1f1f1] pr-1 pl-1">
                <button class="flex items-center gap-[6px]" aria-label="Orbit"><svg class="h-[18px] w-[19px]" viewBox="0 0 19 18"><ellipse cx="9" cy="9" rx="8.500" ry="4" fill="none" stroke="#888"/><ellipse cx="9" cy="9" rx="4" ry="8.500" fill="#fff" fill-opacity=".6" stroke="#888"/><path d="M9 7v5M6.500 9.500h5" stroke="#2a86c8" stroke-width="1.500"/><path d="M12 2l3 1-2 3z" fill="#333"/></svg><svg class="h-[5px] w-[7px]"><use href="#caret"/></svg></button>
                <button class="ml-[7px]" aria-label="Look At"><svg class="h-[17px] w-[17px]" viewBox="0 0 17 17"><path d="M1 5l2-3 2 2 3-3 2 3h4v2H1z" fill="#889" /><rect x=".5" y="5.500" width="16" height="11" fill="#dde" stroke="#667"/><path d="M3 8.500h11v5H3z" fill="#99a" stroke="#667"/></svg></button>
                <button class="ml-[13px]" aria-label="Pan"><svg class="h-[18px] w-[18px]" viewBox="0 0 18 18"><path d="M5 17l-4-6q0-2 3 0L3 4q1-2 2 0l2 4V2q1-2 2 0v6l2-6q2-1 1.500 1L12 8l3-4q2 0 1 2l-3 9v2z" fill="#fff" stroke="#777"/></svg></button>
                <button class="ml-3" aria-label="Zoom"><svg class="h-[18px] w-[19px]" viewBox="0 0 19 18"><circle cx="7" cy="7" r="6.300" fill="#eef4f4" stroke="#888"/><path d="M11 11l6 6" stroke="#444" stroke-width="3"/><path d="M16 1v5M14 3.500h4M14 7h4" stroke="#777"/></svg></button>
                <button class="ml-[11px] flex items-center gap-[6px]" aria-label="Fit"><svg class="h-[18px] w-[19px]" viewBox="0 0 19 18"><circle cx="8" cy="7" r="6.300" fill="#eef4f4" stroke="#888"/><path d="M5 4.500h6v5H5z" fill="#fff" stroke="#556"/><path d="M12 11l5 6" stroke="#444" stroke-width="3"/></svg><svg class="h-[5px] w-[7px]"><use href="#caret"/></svg></button>
                <button class="ml-[7px] flex items-center gap-[3px]" aria-label="Display Settings"><svg class="h-[18px] w-[18px]" viewBox="0 0 18 18"><rect x=".5" y=".5" width="17" height="13" fill="#ddd" stroke="#777"/><path d="M2 2h14v10H2z" fill="#7da7d9"/><path d="M7 14h4l2 3.500H5z" fill="#aaa" stroke="#777" stroke-width=".6"/></svg><svg class="h-[5px] w-[7px]"><use href="#caret"/></svg></button>
                <button class="ml-2 flex items-center gap-1" aria-label="Grid and Snaps"><svg class="h-[18px] w-[18px]" viewBox="0 0 18 18"><path d="M0 0h18v18H0z" fill="#d3d8de"/><path d="M0 2.500h18M0 5.500h18M0 8.500h18M0 11.500h18M0 14.500h18M2.500 0v18M5.500 0v18M8.500 0v18M11.500 0v18M14.500 0v18M.5 0v18M17.500 0v18M0 .5h18M0 17.500h18" stroke="#777"/></svg><svg class="h-[5px] w-[7px]"><use href="#caret"/></svg></button>
                <button class="ml-2 flex items-center gap-1" aria-label="Viewports"><svg class="h-4 w-[17px]" viewBox="0 0 17 16"><path d="M.5.500h16v15H.5z" fill="#8db2e0" stroke="#4d6f9e"/><path d="M8.500 0v16M0 8h17" stroke="#4d6f9e" stroke-width="1.600"/></svg><svg class="h-[5px] w-[7px]"><use href="#caret"/></svg></button>
            </div>
            <b class="absolute right-[24px] bottom-[10px] text-[13px] text-black">XY Plane</b>
        </main>

        <!-- Timeline -->
        <footer class="flex h-[52px] shrink-0 items-start border-t border-[#ccc] pr-4 pl-[13px] text-[#555]">
            <div class="mt-5 flex w-[131px] justify-between">
                <button aria-label="Go to start"><svg class="h-4 w-[14px]" viewBox="0 0 14 16"><path d="M0 1h2v14H0zM13 1v14L3 8z" fill="currentColor"/></svg></button>
                <button aria-label="Step back"><svg class="h-4 w-4" viewBox="0 0 16 16"><path d="M12 1v14L1 8zM13 5h2v6h-2z" fill="currentColor"/></svg></button>
                <button aria-label="Play"><svg class="h-4 w-[14px]" viewBox="0 0 14 16"><path d="M1 0v16l12-8z" fill="currentColor"/></svg></button>
                <button aria-label="Step forward"><svg class="h-4 w-4" viewBox="0 0 16 16"><path d="M4 1v14l11-7zM1 5h2v6H1z" fill="currentColor"/></svg></button>
                <button aria-label="Go to end"><svg class="h-4 w-[14px]" viewBox="0 0 14 16"><path d="M12 1h2v14h-2zM1 1v14l10-7z" fill="currentColor"/></svg></button>
            </div>
            <div class="relative ml-[22px] flex">
                <div class="absolute top-2 left-[3px] h-[7px] w-[51px] bg-[#ffb0b0]"></div>
                <ul id="timeline" class="flex w-[423px] pt-[18px]"></ul>
                <svg class="mt-[11px] ml-[-9px] h-[38px] w-4" viewBox="0 0 16 38"><path d="M0 0h16v5l-5 6H5L0 5z" fill="#666"/><path d="M8 8v30" stroke="#555" stroke-width="2"/></svg>
            </div>
            <button class="mt-[18px] ml-auto" aria-label="Timeline settings"><svg class="h-[18px] w-[18px] text-[#666]"><use href="#gear"/></svg></button>
        </footer>
    </div>
    <div class="mx-[2px] h-[7px] shrink-0 border-t-2 border-[#b2b8b8] bg-linear-to-r from-[#cfe3e4] via-[#e8e6df] via-40% to-[#d5e2e4]"></div>

    <!-- Highlight round the Construct group -->
    <div class="absolute top-[86px] left-[1061px] h-[87px] w-[127px] border-8 border-[#fe0000]"></div>

    <!-- Command tooltip -->
    <div class="absolute top-[175px] left-[1379px] h-[463px] w-[392px] rounded-[18px] bg-[#505050] px-[19px] pt-[34px] font-['Noto_Sans',sans-serif] text-[14px] leading-[19px] font-semibold whitespace-nowrap text-white">
        <p>Creates a construction plane that is offset from the<br>selected face or plane.</p>
        <p class="mt-[18px]">Select a face, plane, or sketch profile, then specify<br>the distance to offset the new plane from the<br>selected geometry.<br>Specify the extent of the plane.</p>
        <svg class="mt-[138px] h-5 w-10" viewBox="0 0 40 20"><path d="M-2 10L14 1l24 9-24 9z" fill="#fadaa2"/></svg>
        <p class="absolute bottom-[2px]">Press Ctrl+/ for more help.</p>
    </div>

    <!-- Construct menu -->
    <ul id="constructMenu" class="absolute top-[167px] left-[1069px] flex h-[477px] w-[305px] flex-col border border-[#777] bg-white px-[5px] pt-[3px] pb-px text-[13px]"></ul>

    <!-- Edit feature dialog -->
    <div class="absolute top-[270px] right-[5px] h-[180px] w-5 border border-[#ccc] bg-[#f1f1f1]"></div>
    <form class="absolute top-[270px] right-[11px] w-[585px] border-2 border-[#ccc] bg-[#f1f1f1] text-[26px] leading-8 text-[#444]">
        <div class="flex h-[56px] items-center border-b-2 border-[#ccc] pr-[8px] pl-[26px] text-[#777]">
            <svg class="h-[22px] w-[22px]" viewBox="0 0 22 22"><circle cx="11" cy="11" r="11" fill="#333"/><path d="M5 11h12" stroke="#ddd" stroke-width="3"/></svg>
            <h2 class="ml-2 flex-1">EDIT FEATURE</h2>
            <svg class="h-4 w-6" viewBox="0 0 24 16"><path d="M0 0v16l12-8zM12 0v16l12-8z" fill="#333"/></svg>
        </div>
        <div class="grid grid-cols-[133px_346px] gap-y-[7px] px-7 pt-[5px] pb-[6px]">
            <span class="self-center">Plane</span>
            <div class="flex items-center">
                <button type="button" class="flex h-[63px] w-[183px] items-center bg-[#0696d7] pl-[17px] text-white"><svg class="h-9 w-[22px]" viewBox="0 0 24 40"><path d="M2 2v28l6-6 6 13 5-3-6-12h8z" fill="#fff" stroke="#555" stroke-width="2"/></svg><span class="ml-[11px]">1 selected</span></button>
                <button type="button" class="ml-[26px] text-[#555]" aria-label="Clear selection"><svg class="h-[21px] w-[22px]" viewBox="0 0 22 22"><path d="M2 2l18 18M20 2L2 20" stroke="#555" stroke-width="5"/></svg></button>
            </div>
            <label for="extent" class="self-center">Extent</label>
            <div class="relative">
                <select id="extent" class="h-[63px] w-full appearance-none border-2 border-[#ccc] bg-white pl-[53px]"><option>Distance</option></select>
                <svg class="pointer-events-none absolute top-3 left-[7px] h-[38px] w-[39px]" viewBox="0 0 39 38"><path d="M2 0v38M37 0v38" stroke="#1c2f55" stroke-width="4"/><path d="M8 19h23" stroke="#333" stroke-width="2"/><path d="M4 19l7-5v10zM35 19l-7-5v10z" fill="#333"/></svg>
                <svg class="pointer-events-none absolute top-[26px] right-3 h-[10px] w-[14px]"><use href="#caret"/></svg>
            </div>
            <label for="distance" class="self-center">Distance</label>
            <div class="relative py-[2px]">
                <input id="distance" value="Layer_H / 2" class="block h-[61px] w-full border-2 border-[#ccc] bg-white pl-[6px]">
                <span class="pointer-events-none absolute top-3 right-[13px] text-[#bbb] italic">fx</span>
            </div>
        </div>
        <div class="flex items-center border-t-2 border-[#777] pt-[18px] pb-[15px] pr-[26px] pl-[18px]">
            <svg class="h-[30px] w-[30px]" viewBox="0 0 30 30"><circle cx="15" cy="15" r="15" fill="#222"/><path d="M13 6h4v4h-4zM11 12h6v9h2v3h-8v-3h2v-6h-2z" fill="#eee"/></svg>
            <button type="button" class="ml-auto h-[47px] w-[141px] border-2 border-[#bbb] bg-[#e8e8e8] text-[#666]">OK</button>
            <button type="button" class="ml-[23px] h-[47px] w-[141px] border-2 border-[#bbb] bg-[#e8e8e8] text-[#666]">Cancel</button>
        </div>
    </form>

    <!-- Offset value field -->
    <div class="absolute top-[515px] left-[942px] border-8 border-[#eee] bg-white">
        <div class="border-4 border-[#ccc] px-[22px] pt-[11px] pb-[5px]">
            <input aria-label="Offset distance" value="Layer_H / 2" class="block h-[55px] w-[247px] bg-[#27829a] pb-2 pl-[2px] text-[47px] leading-[47px] text-white">
        </div>
    </div>

    <!-- Caption -->
    <div class="absolute top-[199px] left-[1052px] flex h-[89px] w-[378px] items-center rounded-full bg-[#d00000]/60 pb-1 pl-[27px] font-['Noto_Sans','Noto_Sans_CJK_KR',sans-serif] text-[38px] font-semibold whitespace-nowrap text-white">Offset Plane 선택</div>

    <!-- Site watermark -->
    <svg class="pointer-events-none absolute top-[495px] left-[500px] h-[135px] w-[1000px] font-['Open_Sans',sans-serif] text-[72px] font-semibold">
        <mask id="letters"><path d="M0 0h1000v135H0z" fill="#fff"/><text x="501" y="92" text-anchor="middle" fill="#000">22ww.tistory.com</text></mask>
        <path d="M0 0h1000v135H0z" fill="#00ace8" fill-opacity=".31" mask="url(#letters)"/>
        <text x="501" y="92" text-anchor="middle" fill="#fff" fill-opacity=".3">22ww.tistory.com</text>
    </svg>

    <script>
        // Ground grid: one major cell is spanned by X and Y on screen
        const X = [35.1, 17.9];
        const Y = [39.6, -14.4];

        function gridPath(step, skipMajor) {
            let d = '';
            for (let i = -70; i <= 70; i += step) {
                if (skipMajor && Math.abs(i - Math.round(i)) < 0.01) continue;
                d += `M${i * X[0] - 70 * Y[0]} ${i * X[1] - 70 * Y[1]}L${i * X[0] + 70 * Y[0]} ${i * X[1] + 70 * Y[1]}`;
                d += `M${i * Y[0] - 70 * X[0]} ${i * Y[1] - 70 * X[1]}L${i * Y[0] + 70 * X[0]} ${i * Y[1] + 70 * X[1]}`;
            }
            return d;
        }
        document.getElementById('minorGrid').setAttribute('d', gridPath(0.2, true));
        document.getElementById('majorGrid').setAttribute('d', gridPath(1, false));

        // Construct menu, null draws a separator
        const menu = [
            ['offset', 'Offset Plane'], ['m-angle', 'Plane at Angle'], ['m-tangent', 'Tangent Plane'], ['m-mid', 'Midplane'],
            ['m-edges', 'Plane Through Two Edges'], ['m-points', 'Plane Through Three Points'],
            ['m-tangent', 'Plane Tangent to Face at Point'], ['m-path', 'Plane Along Path'], null,
            ['m-cyl', 'Axis Through Cylinder/Cone/Torus'], ['m-perp', 'Axis Perpendicular at Point'], ['m-planes', 'Axis Through Two Planes'],
            ['m-axispts', 'Axis Through Two Points'], ['m-axis', 'Axis Through Edge'], ['m-perp', 'Axis Perpendicular to Face at Point'], null,
            ['m-vertex', 'Point at Vertex'], ['m-vertex', 'Point Through Two Edges'], ['m-vertex', 'Point Through Three Planes'],
            ['m-vertex', 'Point at Center of Circle/Sphere/Torus'], ['m-perp', 'Point at Edge and Plane'], ['m-curve', 'Point Along Path']
        ];
        document.getElementById('constructMenu').innerHTML = menu.map((item, i) => {
            if (!item) return '<li class="h-px bg-[#555]"></li>';
            const dots = i === 0 ? '<svg class="ml-auto mr-[10px] h-[14px] w-1" viewBox="0 0 4 14"><path d="M0 0h3v3H0zM0 5.500h3v3H0zM0 11h3v3H0z" fill="#111"/></svg>' : '';
            const bg = i === 0 ? 'bg-[#d9d9d9]' : '';
            return `<li class="flex flex-1"><button class="flex w-full items-center text-left ${bg}"><svg class="ml-px h-[18px] w-[18px]"><use href="#${item[0]}"/></svg><span class="ml-1">${item[1]}</span>${dots}</button></li>`;
        }).join('');

        // Timeline features
        const features = ['tl-sketch', 'offset', 'tl-sketch', 'tl-sketch', 'm-angle', 'tl-sketch', 'extrude', 'extrude', 'extrude', 'ring', 'pattern', 'extrude', 'extrude', 'shell', 'tl-sketch'];
        document.getElementById('timeline').innerHTML = features.map((name, i) => {
            const icon = name === 'ring'
                ? '<circle cx="9" cy="9" r="7" fill="none" stroke="#66afe3" stroke-width="4" stroke-dasharray="4 3.300"/>'
                : `<use href="#${name}"/>`;
            const fade = i > 1 ? 'opacity-30' : '';
            const rail = i === 0 ? 'left-1/2' : 'left-0';
            const end = i === features.length - 1 ? 'right-1/2' : 'right-0';
            return `<li class="relative flex h-[30px] flex-1 justify-center"><svg class="h-[19px] w-[18px] ${fade}">${icon}</svg><i class="absolute bottom-0 left-1/2 h-2 w-[2px] bg-[#ccc]"></i><i class="absolute bottom-0 h-[2px] bg-[#ccc] ${rail} ${end}"></i></li>`;
        }).join('');
    </script>
</body>
</html>
